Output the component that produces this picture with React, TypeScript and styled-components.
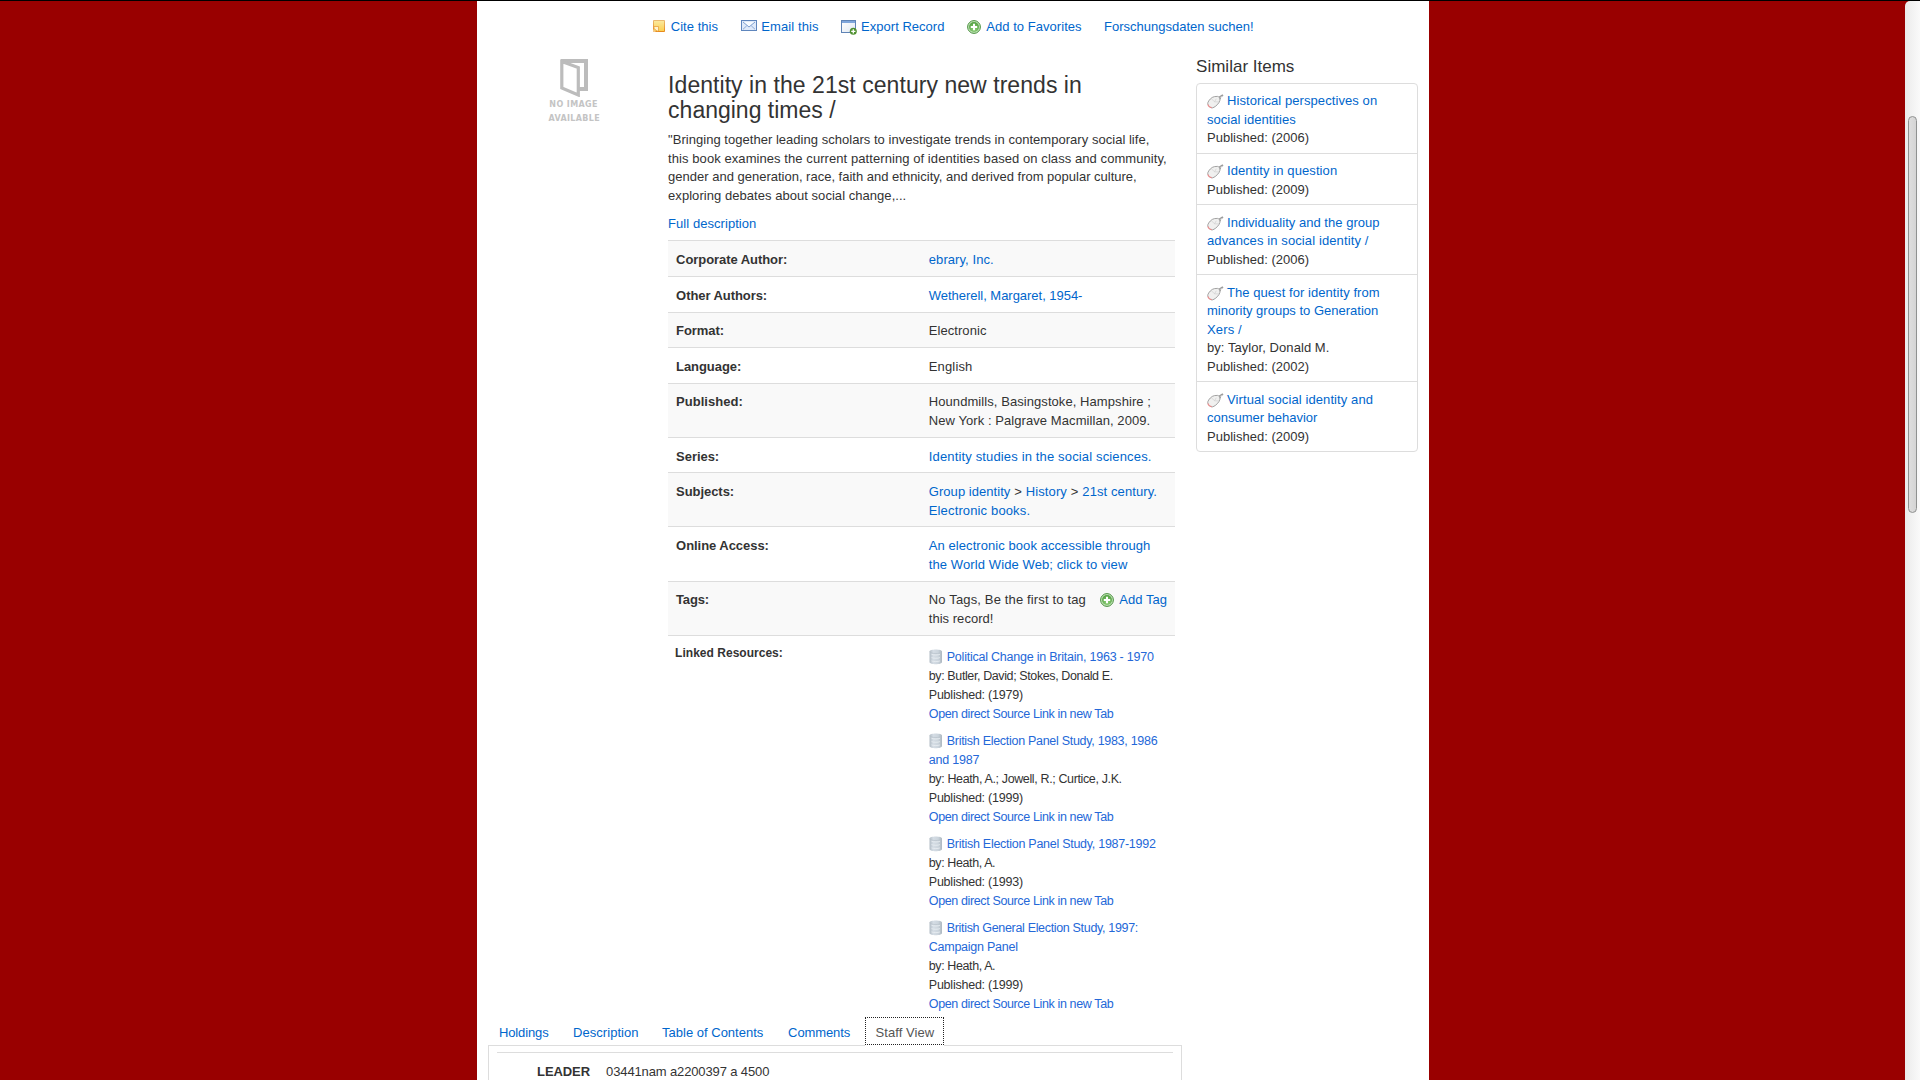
import React from "react";
import styled, { createGlobalStyle } from "styled-components";

const Global = createGlobalStyle`
  * { box-sizing: border-box; }
  html, body { margin: 0; padding: 0; overflow: hidden; background: #990000; }
  body { font-family: "Liberation Sans", Arial, Helvetica, sans-serif; font-size: 13px; line-height: 18.57px; color: #333; }
`;

const Screen = styled.div`
  display: flex;
  width: 1920px;
  height: 1080px;
  overflow: hidden;
  border-top: 1px solid #000;
  background: #990000;
`;
const Backdrop = styled.div`
  flex: 1;
  background: #990000;
`;
const Page = styled.main`
  width: 952px;
  flex: none;
  background: #fff;
  overflow: hidden;
`;
const ScrollTrack = styled.div`
  width: 15px;
  flex: none;
  padding: 115px 3px 0;
  border-radius: 5px 0 0 0;
  background: linear-gradient(90deg, #ebebeb, #fafafa);
`;
const ScrollThumb = styled.div`
  width: 9px;
  height: 397px;
  border: 1px solid #8f9190;
  border-radius: 5px;
  background: linear-gradient(90deg, #dedede, #d4d4d4);
`;

/* One line of text; `track` tunes its letter spacing. */
const Line = styled.span<{ $track?: number }>`
  white-space: nowrap;
  letter-spacing: ${(p) => p.$track ?? 0}px;
`;
const LinkText = styled(Line)`
  color: #0066cc;
`;
const SoftLink = styled(Line)`
  color: #2468d8;
`;

const Toolbar = styled.nav`
  display: flex;
  height: 49px;
  padding: 17px 0 0 176.5px;
`;
const Tool = styled.div<{ $width: number }>`
  display: flex;
  align-items: flex-start;
  width: ${(p) => p.$width}px;
`;
const ToolIcon = styled.div<{ $width: number }>`
  width: ${(p) => p.$width}px;
  height: 18px;
  flex: none;
  svg { display: block; margin-top: 2px; }
`;

const Columns = styled.div`
  display: flex;
  align-items: flex-start;
`;
const Left = styled.div`
  width: 704px;
  margin-left: 11px;
  margin-right: 4px;
  flex: none;
`;
const Record = styled.section`
  display: flex;
  height: 967px;
`;
const Cover = styled.div`
  width: 180px;
  flex: none;
  display: flex;
  flex-direction: column;
  padding: 9px 0 0 61px;
`;
const CoverArt = styled.div`
  height: 39px;
  margin-left: 11.5px;
  svg { display: block; }
`;
const CoverCaption = styled.div<{ $track: number; $indent: number }>`
  margin-left: ${(p) => p.$indent}px;
  font: bold 8px/14px "DejaVu Sans", sans-serif;
  letter-spacing: ${(p) => p.$track}px;
  white-space: nowrap;
  color: #c4c4c4;
`;
const Details = styled.div`
  width: 507px;
  padding-top: 23px;
`;
const Title = styled.h1`
  margin: 0 0 8px;
  padding-left: 0.6px;
  font-size: 23px;
  line-height: 25px;
  font-weight: 400;
  display: flex;
  flex-direction: column;
`;
const Paragraph = styled.p`
  margin: 0 0 10px;
  padding-left: 0.6px;
  display: flex;
  flex-direction: column;
`;
const FullLink = styled.div`
  height: 24.72px;
  padding-left: 0.6px;
`;
const Row = styled.div<{ $height: number; $shade?: boolean; $pad?: number }>`
  display: flex;
  height: ${(p) => p.$height}px;
  padding: ${(p) => p.$pad ?? 9}px 7.5px 0 8.6px;
  border-top: 1px solid #ddd;
  line-height: 19px;
  background: ${(p) => (p.$shade ? "#f9f9f9" : "#fff")};
`;
const Label = styled.div`
  width: 252.7px;
  flex: none;
  font-weight: 700;
`;
const Value = styled.div`
  display: flex;
  flex-direction: column;
`;
const TagValue = styled.div`
  display: flex;
  flex: 1;
  justify-content: space-between;
`;
const AddTag = styled.div`
  display: flex;
  gap: 5px;
  svg { margin-top: 3px; }
`;
const LinkedLabel = styled(Label)`
  margin-left: -1px;
  margin-right: 1px;
  font-size: 12px;
`;
const LinkedList = styled.div`
  display: flex;
  flex-direction: column;
  gap: 8px;
  padding-top: 4px;
  font-size: 12.5px;
  line-height: 19px;
`;
const LinkedItem = styled.div`
  display: flex;
  flex-direction: column;
`;
const IconLine = styled.div<{ $gap: number; $drop?: number; $inset?: number }>`
  display: flex;
  gap: ${(p) => p.$gap}px;
  padding-left: ${(p) => p.$inset ?? 0}px;
  svg { flex: none; margin-top: ${(p) => p.$drop ?? 2}px; }
`;

const Tabs = styled.div`
  display: flex;
  height: 29px;
  position: relative;
  z-index: 1;
  margin-bottom: -1px;
`;
const Tab = styled.div<{ $width: number }>`
  width: ${(p) => p.$width}px;
  padding: 7px 0 0 11.5px;
`;
const ActiveTab = styled.div`
  width: 79px;
  height: 28px;
  margin-left: -1px;
  padding: 6px 0 0 9.3px;
  border: 1px dotted #222;
  box-shadow: 0 1px 0 #fff;
  background: #fff;
  color: #555;
`;
const Panel = styled.div`
  width: 694px;
  height: 60px;
  padding: 6px 8px 0;
  border: 1px solid #ddd;
  border-bottom: 0;
`;
const MarcRow = styled.div`
  display: flex;
  padding: 10px 0 0 40.6px;
  border-top: 1px solid #ddd;
`;
const MarcTag = styled.div`
  width: 69px;
  font-weight: 700;
`;

const Sidebar = styled.aside`
  width: 222px;
  padding-top: 7px;
`;
const SideTitle = styled.h4`
  margin: 0 0 7px;
  padding-left: 0.6px;
  font-size: 17px;
  line-height: 19px;
  font-weight: 400;
`;
const Items = styled.div`
  border: 1px solid #ddd;
  border-radius: 4px;
`;
const Item = styled.div<{ $height: number; $pad: number }>`
  display: flex;
  flex-direction: column;
  height: ${(p) => p.$height}px;
  padding: ${(p) => p.$pad}px 10px 0 10.5px;
  border-bottom: 1px solid #ddd;
  &:last-child { border-bottom: 0; }
`;

const PlusIcon = () => (
  <svg width="14" height="14" viewBox="0 0 14 14">
    <defs>
      <radialGradient id="plus" cx="50%" cy="75%" r="70%">
        <stop offset="0" stopColor="#8fd07a" />
        <stop offset="1" stopColor="#56a245" />
      </radialGradient>
    </defs>
    <circle cx="7" cy="7" r="6.4" fill="#c6e6bc" stroke="#4b9040" strokeWidth="1" />
    <circle cx="7" cy="7" r="5" fill="url(#plus)" />
    <path d="M7 3.8v6.4M3.8 7h6.4" stroke="#fff" strokeWidth="2" />
  </svg>
);
const NoteIcon = () => (
  <svg width="12" height="12" viewBox="0 0 12 12">
    <defs>
      <linearGradient id="note" x1="0" y1="0" x2="0" y2="1">
        <stop offset="0" stopColor="#fbe9a0" />
        <stop offset="1" stopColor="#fbcf4e" />
      </linearGradient>
      <linearGradient id="noteEdge" x1="0" y1="0" x2="0" y2="1">
        <stop offset="0" stopColor="#eaba70" />
        <stop offset="1" stopColor="#e88a1c" />
      </linearGradient>
    </defs>
    <path d="M.5.5h11v11H.5z" fill="url(#note)" stroke="url(#noteEdge)" />
    <path d="M1 6.5h4.5v4.500H4L1 8.500z" fill="#fff3cf" stroke="#e9a23f" strokeWidth=".8" />
    <path d="M0 9l3 3H0z" fill="#f3c88a" />
  </svg>
);
const MailIcon = () => (
  <svg width="16" height="11" viewBox="0 0 16 11">
    <rect x=".5" y=".5" width="15" height="10" fill="#dfeafa" stroke="#5f86bd" />
    <path d="M2 2l6 5 6-5" fill="#f7fbff" stroke="#7d9fd0" />
    <path d="M2 9.3l3.8-3.6M14 9.3l-3.8-3.6" stroke="#8dabd6" fill="none" />
  </svg>
);
const ExportIcon = () => (
  <svg width="16" height="15" viewBox="0 0 16 15">
    <defs>
      <linearGradient id="win" x1="0" y1="0" x2="1" y2="1">
        <stop offset="0" stopColor="#fff" />
        <stop offset="1" stopColor="#dfe7f2" />
      </linearGradient>
    </defs>
    <rect x=".5" y=".5" width="14" height="12" fill="url(#win)" stroke="#5f83b5" />
    <path d="M1 2h13" stroke="#7fa6dc" strokeWidth="2" />
    <circle cx="12.3" cy="11.3" r="3.5" fill="#4f9130" />
    <path d="M12.3 9.2v4.2M10.2 11.3h4.2" stroke="#fff" strokeWidth="1.3" />
  </svg>
);
const BookIcon = () => (
  <svg width="28" height="38" viewBox="0 0 28 38">
    <path d="M1 2h25v28h-8" fill="none" stroke="#bcbcbc" strokeWidth="4" />
    <path d="M1.800 2.500L18.300 8.500v27.500L1.800 29z" fill="#fff" stroke="#bcbcbc" strokeWidth="3.200" />
  </svg>
);
const MouseIcon = () => (
  <svg width="17" height="15" viewBox="0 0 17 15">
    <path d="M11.5 5.5C13 5 13.5 3.5 13 3l3-2" fill="none" stroke="#999" strokeWidth="1.8" />
    <path d="M12.7 3.8l2.5-1.6" stroke="#ddd" strokeWidth=".7" />
    <path d="M.8 8.8C1.5 6.5 4.5 3 7.5 2.6l3-.2c1.8.2 2.8 2 2.4 4-.5 2.6-4 6.3-7 7.4-2.2.6-5.7-2.3-5.1-5z" fill="#f0f0ef" stroke="#999" strokeWidth=".9" />
    <path d="M4.5 4.8l3 3 4.8.2M7.5 7.8l1.8-3" fill="none" stroke="#c9c9c9" strokeWidth=".6" />
    <path d="M1 10.5c.3 1.600 1.800 3 3.700 3.200" fill="none" stroke="#ee8c8c" strokeWidth="1.2" />
  </svg>
);
const DatabaseIcon = () => (
  <svg width="14" height="16" viewBox="0 0 14 16">
    <defs>
      <linearGradient id="db" x1="0" y1="0" x2="1" y2="0">
        <stop offset="0" stopColor="#b3bdc6" />
        <stop offset=".3" stopColor="#d5dde5" />
        <stop offset=".7" stopColor="#cbd4dc" />
        <stop offset="1" stopColor="#adb7c0" />
      </linearGradient>
    </defs>
    <path d="M.5 2.5C.5-.3 13-.3 13 2.5V13c0 3-12.5 3-12.5 0z" fill="url(#db)" />
    <path d="M.8 3c2 2 10 2 12 0" fill="none" stroke="#b8c1ca" strokeWidth=".7" />
    <path d="M2.5 5.3c2 .9 6.5.9 8.500 0M2.500 8.600c2 .9 6.500.9 8.500 0M2.500 11.900c2 .9 6.500.9 8.500 0" fill="none" stroke="#eaeff3" strokeWidth=".8" />
  </svg>
);

type T = [string, number];

const description: T[] = [
  ['"Bringing together leading scholars to investigate trends in contemporary social life,', 0.03],
  ["this book examines the current patterning of identities based on class and community,", 0.072],
  ["gender and generation, race, faith and ethnicity, and derived from popular culture,", -0.002],
  ["exploring debates about social change,...", 0.045],
];

const similar: { height: number; pad: number; title: T[]; meta: T[] }[] = [
  { height: 70, pad: 8.1, title: [["Historical perspectives on", 0.08], ["social identities", 0.03]], meta: [["Published: (2006)", 0.008]] },
  { height: 51, pad: 8.1, title: [["Identity in question", 0.09]], meta: [["Published: (2009)", 0.008]] },
  { height: 70, pad: 8.56, title: [["Individuality and the group", 0.029], ["advances in social identity /", 0.11]], meta: [["Published: (2006)", 0.008]] },
  { height: 107, pad: 8.56, title: [["The quest for identity from", 0.06], ["minority groups to Generation", 0], ["Xers /", 0.15]], meta: [["by: Taylor, Donald M.", 0.06], ["Published: (2002)", 0.008]] },
  { height: 69, pad: 8.56, title: [["Virtual social identity and", 0.091], ["consumer behavior", -0.01]], meta: [["Published: (2009)", 0.008]] },
];

const linked: { title: T[]; meta: T[] }[] = [
  { title: [["Political Change in Britain, 1963 - 1970", -0.23]], meta: [["by: Butler, David; Stokes, Donald E.", -0.39], ["Published: (1979)", -0.23]] },
  { title: [["British Election Panel Study, 1983, 1986", -0.29], ["and 1987", -0.2]], meta: [["by: Heath, A.; Jowell, R.; Curtice, J.K.", -0.37], ["Published: (1999)", -0.23]] },
  { title: [["British Election Panel Study, 1987-1992", -0.27]], meta: [["by: Heath, A.", -0.4], ["Published: (1993)", -0.23]] },
  { title: [["British General Election Study, 1997:", -0.33], ["Campaign Panel", -0.25]], meta: [["by: Heath, A.", -0.4], ["Published: (1999)", -0.23]] },
];

const fields: { label: T; height: number; pad?: number; link?: boolean; lines: T[] }[] = [
  { label: ["Corporate Author:", -0.06], height: 36, link: true, lines: [["ebrary, Inc.", 0.07]] },
  { label: ["Other Authors:", -0.07], height: 36, link: true, lines: [["Wetherell, Margaret, 1954-", -0.03]] },
  { label: ["Format:", -0.07], height: 35, pad: 8, lines: [["Electronic", 0.06]] },
  { label: ["Language:", -0.07], height: 36, lines: [["English", 0.15]] },
  { label: ["Published:", 0.02], height: 54, pad: 8, lines: [["Houndmills, Basingstoke, Hampshire ;", 0.07], ["New York : Palgrave Macmillan, 2009.", 0.07]] },
  { label: ["Series:", -0.05], height: 35, link: true, lines: [["Identity studies in the social sciences.", 0.15]] },
];

export default function App() {
  return (
    <>
      <Global />
      <Screen>
        <Backdrop />
        <Page>
          <Toolbar>
            <Tool $width={88}>
              <ToolIcon $width={17.8}><NoteIcon /></ToolIcon>
              <LinkText $track={0.02}>Cite this</LinkText>
            </Tool>
            <Tool $width={100}>
              <ToolIcon $width={20.3}><MailIcon /></ToolIcon>
              <LinkText $track={0.095}>Email this</LinkText>
            </Tool>
            <Tool $width={126}>
              <ToolIcon $width={20.1}><ExportIcon /></ToolIcon>
              <LinkText $track={0.02}>Export Record</LinkText>
            </Tool>
            <Tool $width={137}>
              <ToolIcon $width={19.2}><PlusIcon /></ToolIcon>
              <LinkText $track={0.05}>Add to Favorites</LinkText>
            </Tool>
            <LinkText $track={0}>Forschungsdaten suchen!</LinkText>
          </Toolbar>

          <Columns>
            <Left>
              <Record>
                <Cover>
                  <CoverArt><BookIcon /></CoverArt>
                  <CoverCaption $track={0.4} $indent={0.8}>NO IMAGE</CoverCaption>
                  <CoverCaption $track={0.35} $indent={0}>AVAILABLE</CoverCaption>
                </Cover>
                <Details>
                  <Title>
                    <Line $track={0.05}>Identity in the 21st century new trends in</Line>
                    <Line>changing times /</Line>
                  </Title>
                  <Paragraph>
                    {description.map(([text, track]) => (
                      <Line key={text} $track={track}>{text}</Line>
                    ))}
                  </Paragraph>
                  <FullLink><LinkText $track={0.05}>Full description</LinkText></FullLink>

                  {fields.map((f, i) => (
                    <Row key={f.label[0]} $height={f.height} $pad={f.pad} $shade={i % 2 === 0}>
                      <Label><Line $track={f.label[1]}>{f.label[0]}</Line></Label>
                      <Value>
                        {f.lines.map(([text, track]) =>
                          f.link ? (
                            <LinkText key={text} $track={track}>{text}</LinkText>
                          ) : (
                            <Line key={text} $track={track}>{text}</Line>
                          )
                        )}
                      </Value>
                    </Row>
                  ))}
                  <Row $height={54} $shade>
                    <Label><Line $track={-0.06}>Subjects:</Line></Label>
                    <Value>
                      <Line $track={0.18}>
                        <LinkText $track={0.05}>Group identity</LinkText> &gt; <LinkText $track={0.098}>History</LinkText> &gt;{" "}
                        <LinkText $track={0.1}>21st century.</LinkText>
                      </Line>
                      <LinkText $track={0.14}>Electronic books.</LinkText>
                    </Value>
                  </Row>
                  <Row $height={55}>
                    <Label><Line $track={-0.05}>Online Access:</Line></Label>
                    <Value>
                      <LinkText $track={0.07}>An electronic book accessible through</LinkText>
                      <LinkText $track={0.1}>the World Wide Web; click to view</LinkText>
                    </Value>
                  </Row>
                  <Row $height={54} $pad={8} $shade>
                    <Label><Line $track={-0.2}>Tags:</Line></Label>
                    <TagValue>
                      <Value>
                        <Line $track={0.15}>No Tags, Be the first to tag</Line>
                        <Line $track={0.028}>this record!</Line>
                      </Value>
                      <AddTag>
                        <PlusIcon />
                        <LinkText $track={0.038}>Add Tag</LinkText>
                      </AddTag>
                    </TagValue>
                  </Row>
                  <Row $height={380} $pad={8}>
                    <LinkedLabel><Line $track={0.021}>Linked Resources:</Line></LinkedLabel>
                    <LinkedList>
                      {linked.map((item) => (
                        <LinkedItem key={item.title[0][0]}>
                          <IconLine $gap={3.8} $inset={0.2} $drop={1}>
                            <DatabaseIcon />
                            <SoftLink $track={item.title[0][1]}>{item.title[0][0]}</SoftLink>
                          </IconLine>
                          {item.title.slice(1).map(([text, track]) => (
                            <SoftLink key={text} $track={track}>{text}</SoftLink>
                          ))}
                          {item.meta.map(([text, track]) => (
                            <Line key={text} $track={track}>{text}</Line>
                          ))}
                          <SoftLink $track={-0.37}>Open direct Source Link in new Tab</SoftLink>
                        </LinkedItem>
                      ))}
                    </LinkedList>
                  </Row>
                </Details>
              </Record>

              <Tabs>
                <Tab $width={74.1}><LinkText $track={-0.13}>Holdings</LinkText></Tab>
                <Tab $width={89}><LinkText $track={0.04}>Description</LinkText></Tab>
                <Tab $width={126}><LinkText $track={0}>Table of Contents</LinkText></Tab>
                <Tab $width={89.6}><LinkText $track={-0.1}>Comments</LinkText></Tab>
                <ActiveTab><Line $track={0.08}>Staff View</Line></ActiveTab>
              </Tabs>
              <Panel>
                <MarcRow>
                  <MarcTag><Line $track={-0.1}>LEADER</Line></MarcTag>
                  <Line $track={-0.13}>03441nam a2200397 a 4500</Line>
                </MarcRow>
              </Panel>
            </Left>

            <Sidebar>
              <SideTitle><Line>Similar Items</Line></SideTitle>
              <Items>
                {similar.map((item) => (
                  <Item key={item.title[0][0]} $height={item.height} $pad={item.pad}>
                    <IconLine $gap={3}>
                      <MouseIcon />
                      <LinkText $track={item.title[0][1]}>{item.title[0][0]}</LinkText>
                    </IconLine>
                    {item.title.slice(1).map(([text, track]) => (
                      <LinkText key={text} $track={track}>{text}</LinkText>
                    ))}
                    {item.meta.map(([text, track]) => (
                      <Line key={text} $track={track}>{text}</Line>
                    ))}
                  </Item>
                ))}
              </Items>
            </Sidebar>
          </Columns>
        </Page>
        <Backdrop />
        <ScrollTrack><ScrollThumb /></ScrollTrack>
      </Screen>
    </>
  );
}
